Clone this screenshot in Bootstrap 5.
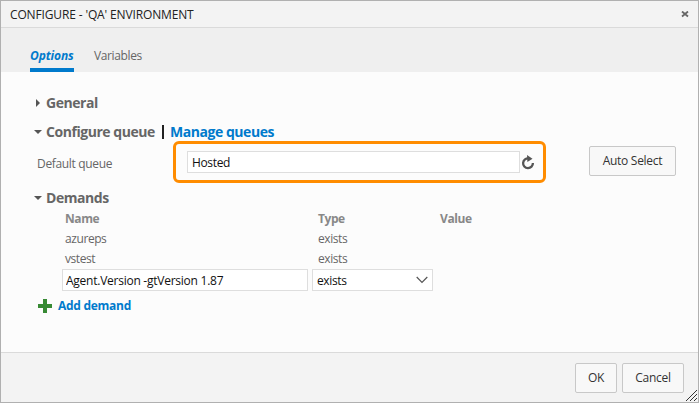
<!DOCTYPE html>
<html lang="en">
<head>
<meta charset="utf-8">
<meta name="viewport" content="width=device-width, initial-scale=1">
<title>Configure environment</title>
<link href="https://cdn.jsdelivr.net/npm/bootstrap@5.3.0/dist/css/bootstrap.min.css" rel="stylesheet">
<style>
body{font-family:"Open Sans","Noto Sans",sans-serif;font-size:12px;line-height:18px;letter-spacing:-.28px;color:#666;background:#fcfcfc;overflow:hidden}
.dialog{width:699px;height:403px;border:1px solid #b0b0b0}
.titlebar{height:27px;background:#f3f3f3;border-bottom:1px solid #dadada;color:#222;padding:1px 9px 0}
.titlebar .caption{letter-spacing:-.14px}
.tabs-strip{height:44px;background:#efefef;padding-left:29px;gap:20px}
.tabs-strip .nav-link{padding:0 0 4px;color:#666;border-bottom:4px solid transparent;line-height:16px;letter-spacing:-.38px}
.tabs-strip .nav-link.active{color:#007acc;border-color:#007acc;font-weight:700;font-style:italic;width:44px;letter-spacing:-.1px}
.content{padding:16px 0 0 32px}
.section-title{font-size:14px;font-weight:700;letter-spacing:-.45px;line-height:18px}
.section-title svg{width:8px;margin:0 4px 0 1px}
.general{height:29px}
.configure{height:24px;padding-top:5px}
.demands{height:26px;padding-top:4px}
.divider{width:2px;height:14px;background:#222;margin:0 6px 0 7px}
a{color:#007acc;text-decoration:none}
.queue-row{height:42px}
.queue-label{width:140px;padding:3px 0 0 4px;letter-spacing:-.33px}
.highlight{width:373px;height:42px;border:3px solid #ff8c00;border-radius:6px;padding-left:11px;gap:1px}
.form-control{font-size:12px;line-height:18px;letter-spacing:-.25px;color:#111;border:1px solid #dedede;border-radius:0;padding:1px 4px;height:22px;min-height:0;background:#fff}
.queue-input{width:333px;padding-top:2px;letter-spacing:-.35px}
.btn{font-size:12px;line-height:18px;letter-spacing:-.28px;color:#333;background:#f8f8f8;border:1px solid #c8c8c8;border-radius:2px;height:30px;padding:0}
.btn-auto{width:87px;margin:-3px 0 0 43px}
.btn-ok{width:42px}.btn-cancel{width:62px}
.demand-grid{display:grid;grid-template-columns:246px 4px 128px 120px;grid-template-rows:19px 20px 20px 24px;padding-left:29px;align-items:center;line-height:18px}
.demand-grid .c1{grid-column:1;padding-left:3px}
.demand-grid .c2{grid-column:3;padding-left:6px}
.demand-grid span{letter-spacing:-.42px;padding-top:1px}
.demand-grid .heading{font-weight:700;color:#888;padding-top:1px}
.demand-grid .select-box span{letter-spacing:-.38px}
.agent{grid-column:1;padding-left:3px}
.select-box{width:121px;grid-column:3}
.add-row{padding:5px 0 0 5px;gap:6px;font-weight:700}
.footer-bar{height:50px;background:#f3f3f3;border-top:1px solid #dadada;gap:5px;padding-right:14px}
.footer-bar .btn{padding-top:1px}
.grip{right:1px;bottom:1px}
</style>
<script src="https://cdn.jsdelivr.net/npm/bootstrap@5.3.0/dist/js/bootstrap.bundle.min.js"></script>
</head>
<body>
<div class="dialog d-flex flex-column position-relative">
  <header class="titlebar d-flex align-items-center justify-content-between flex-shrink-0">
    <span class="caption">CONFIGURE - 'QA' ENVIRONMENT</span>
    <svg width="8" height="7" viewBox="0 0 8 7"><path d="M1 .5 7 5.5M7 .5 1 5.5" stroke="#666" stroke-width="1.8"/></svg>
  </header>
  <nav class="tabs-strip nav d-flex align-items-end flex-shrink-0">
    <a class="nav-link active" href="#">Options</a>
    <a class="nav-link" href="#">Variables</a>
  </nav>
  <main class="content flex-grow-1">
    <div class="section-title general d-flex align-items-center">
      <svg height="8" viewBox="0 0 8 8"><path d="M2 0 6 4 2 8Z" fill="#555"/></svg><span>General</span>
    </div>
    <div class="section-title configure d-flex align-items-center">
      <svg height="6" viewBox="0 0 8 6"><path d="M0 1H8L4 5Z" fill="#555"/></svg><span>Configure queue</span><span class="divider"></span><a href="#">Manage queues</a>
    </div>
    <div class="queue-row d-flex align-items-center">
      <label class="queue-label" for="queue">Default queue</label>
      <div class="highlight d-flex align-items-center">
        <input id="queue" class="form-control queue-input" value="Hosted">
        <svg width="14" height="15" viewBox="0 0 14 15"><path d="M7.8 3.4A4.9 4.9 0 1 0 11.9 8" fill="none" stroke="#555" stroke-width="2.3"/><path d="M6 0 11.5 3.8 6.4 7Z" fill="#555"/></svg>
      </div>
      <button class="btn btn-auto">Auto Select</button>
    </div>
    <div class="section-title demands d-flex align-items-center">
      <svg height="6" viewBox="0 0 8 6"><path d="M0 1H8L4 5Z" fill="#555"/></svg><span>Demands</span>
    </div>
    <div class="demand-grid">
      <span class="c1 heading">Name</span><span class="c2 heading">Type</span><span class="heading">Value</span>
      <span class="c1">azureps</span><span class="c2">exists</span>
      <span class="c1">vstest</span><span class="c2">exists</span>
      <input class="form-control agent" value="Agent.Version -gtVersion 1.87">
      <div class="form-control select-box d-flex align-items-center justify-content-between"><span>exists</span><svg width="12" height="8" viewBox="0 0 12 8"><path d="M.7 1 6 6.3 11.3 1" fill="none" stroke="#555" stroke-width="1.2"/></svg></div>
    </div>
    <div class="add-row d-flex align-items-center">
      <svg width="14" height="14" viewBox="0 0 14 14"><path d="M5 0H9V5H14V9H9V14H5V9H0V5H5Z" fill="#388a34"/></svg><a href="#">Add demand</a>
    </div>
  </main>
  <footer class="footer-bar d-flex align-items-center justify-content-end flex-shrink-0">
    <button class="btn btn-ok">OK</button><button class="btn btn-cancel">Cancel</button>
  </footer>
  <svg class="grip position-absolute" width="11" height="11" viewBox="0 0 11 11"><path d="M0 11 11 0M4 11 11 4M8 11 11 8" stroke="#333" stroke-width="1"/></svg>
</div>
</body>
</html>
